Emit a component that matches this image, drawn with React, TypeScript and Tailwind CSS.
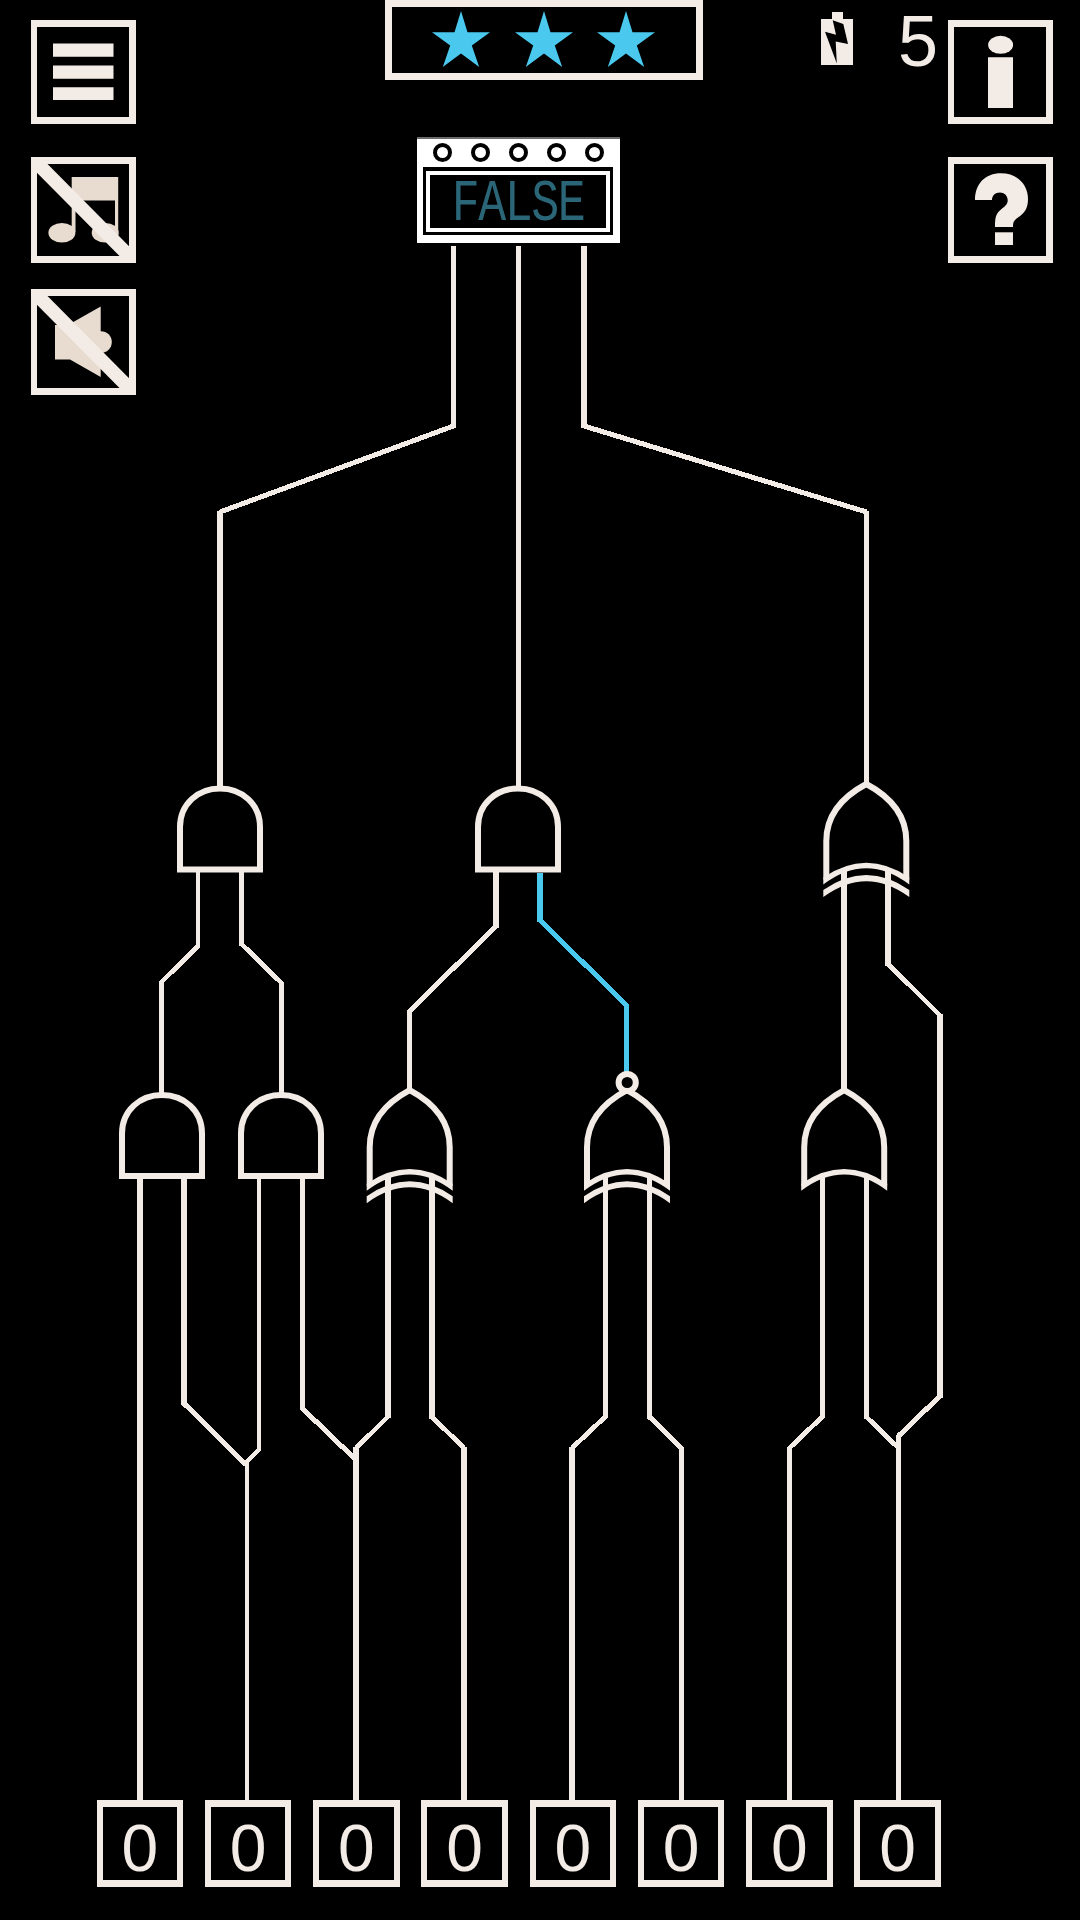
import type { ReactNode } from 'react';

const CREAM = '#f3ece6';
const BLUE = '#4ac8ee';

type Point = [number, number];
type Wire = { points: Point[]; widths: number[]; on?: boolean };

// Each wire lists its corner points and one thickness per segment.
const wires: Wire[] = [
  { points: [[453.5, 246], [453.5, 426], [220, 512], [220, 788]], widths: [5, 5, 6] },
  { points: [[518.5, 246], [518.5, 788]], widths: [5] },
  { points: [[584, 246], [584, 426], [866.5, 512], [866.5, 785]], widths: [6, 5, 5] },

  { points: [[198, 871], [198, 946], [161.5, 982], [161.5, 1094]], widths: [4, 4.8, 5] },
  { points: [[241.5, 871], [241.5, 944], [281.5, 983], [281.5, 1094]], widths: [5, 4.8, 5] },
  { points: [[496, 871], [496, 926], [409.5, 1011.5], [409.5, 1090]], widths: [6, 5, 5] },
  { points: [[540, 873], [540, 920], [626.5, 1005.5], [626.5, 1072]], widths: [6, 5, 5], on: true },
  { points: [[844, 870], [844, 1090]], widths: [6] },
  { points: [[888, 870], [888, 964], [940, 1015.5], [940, 1396], [898.5, 1436], [898.5, 1801]], widths: [6, 4.5, 6, 5, 5] },

  { points: [[140, 1177], [140, 1801]], widths: [6] },
  { points: [[184, 1177], [184, 1403.5], [246, 1464.5]], widths: [6, 5] },
  { points: [[259, 1177], [259, 1449.5], [247, 1461.5], [247, 1801]], widths: [4, 4.5, 4] },
  { points: [[302.5, 1177], [302.5, 1408.5], [355, 1459]], widths: [5, 5] },
  { points: [[388, 1177], [388, 1416.5], [356, 1448], [356, 1801]], widths: [6, 4.5, 6] },
  { points: [[432, 1177], [432, 1417], [464, 1448], [464, 1801]], widths: [6, 4.8, 6] },
  { points: [[605.5, 1177], [605.5, 1416.5], [572, 1448], [572, 1801]], widths: [5, 4.8, 6] },
  { points: [[649.5, 1177], [649.5, 1417], [681.5, 1448], [681.5, 1801]], widths: [5, 5, 5] },
  { points: [[822.5, 1177], [822.5, 1416.5], [789.5, 1448], [789.5, 1801]], widths: [5, 4.8, 5] },
  { points: [[866.5, 1177], [866.5, 1417], [897.5, 1447]], widths: [5, 4.8] },
];

function WireLine({ points, widths, on }: Wire) {
  return (
    <g stroke={on ? BLUE : CREAM} strokeLinecap="butt" shapeRendering="crispEdges">
      {widths.map((w, i) => {
        const [x1, y1] = points[i];
        const [x2, y2] = points[i + 1];
        const straight = x1 === x2;
        // Vertical runs reach slightly past their corners so that the joints stay closed.
        const top = straight && i > 0 ? 1.5 : 0;
        const bottom = straight && i < widths.length - 1 ? 1.5 : 0;
        return <line key={i} x1={x1} y1={y1 - top} x2={x2} y2={y2 + bottom} strokeWidth={w} />;
      })}
    </g>
  );
}

function AndGate({ x, y }: { x: number; y: number }) {
  return (
    <path
      transform={`translate(${x} ${y})`}
      d="M-40 84.5V42C-40 19-22 3.5 0 3.5S40 19 40 42V84.5Z"
      fill="none"
      stroke={CREAM}
      strokeWidth={6}
    />
  );
}

function OrGate({ x, y, exclusive, negated }: { x: number; y: number; exclusive?: boolean; negated?: boolean }) {
  return (
    <g transform={`translate(${x} ${y})`}>
      <path d="M-40 98.5V60C-40 32-22.5 15 0 3C22.5 15 40 32 40 60V98.5" fill="none" stroke={CREAM} strokeWidth={6} />
      <path d="M-43 96.5Q0 67 43 96.5V103.5Q0 71 -43 103.5Z" fill={CREAM} />
      {exclusive && <path d="M-43 109Q0 79 43 109V116Q0 84.3 -43 116Z" fill={CREAM} />}
      {negated && <circle cx={0.2} cy={-4.7} r={8.6} fill="#000" stroke={CREAM} strokeWidth={6} />}
    </g>
  );
}

function Circuit() {
  return (
    <svg className="pointer-events-none absolute inset-0" width="1080" height="1920" viewBox="0 0 1080 1920">
      {wires.map((w, i) => (
        <WireLine key={i} {...w} />
      ))}
      <AndGate x={220} y={785} />
      <AndGate x={518} y={785} />
      <OrGate x={866.3} y={781} exclusive />
      <AndGate x={162} y={1091.5} />
      <AndGate x={281} y={1091.5} />
      <OrGate x={409.7} y={1087.2} exclusive />
      <OrGate x={627} y={1087.2} exclusive negated />
      <OrGate x={844.2} y={1087.2} />
    </svg>
  );
}

function IconButton({ label, tall, children }: { label: string; tall?: boolean; children: ReactNode }) {
  return (
    <button
      aria-label={label}
      className={
        tall
          ? 'relative block h-[106px] w-[105px] border-[7px] border-l-[6px] border-[#f3ece6]'
          : 'relative block h-[104px] w-[105px] border-[7px] border-l-[6px] border-[#f3ece6]'
      }
    >
      {children}
    </button>
  );
}

// Icon drawings use the whole button, border included, as their canvas.
function Icon({ children }: { children: ReactNode }) {
  return (
    <svg className="absolute -left-[6px] -top-[7px]" width="105" height="106" viewBox="0 0 105 106">
      {children}
    </svg>
  );
}

function Slash() {
  return <path d="M0 0L105 106" stroke={CREAM} strokeWidth={13.6} />;
}

function Star() {
  return (
    <svg width="58" height="56" viewBox="0 0 58 56">
      <path d="M29 0L35.5 21.3H58L39.8 34.5L47.2 56L29 42.5L10.8 56L18.2 34.5L0 21.3H22.5Z" fill={BLUE} />
    </svg>
  );
}

function Display() {
  return (
    <div className="ml-8 mt-[57px] h-[106px] w-[203px] border-t-2 border-[#6b6b6b] bg-white px-[6px] pt-1">
      <div className="flex h-[19px] justify-between px-[10px]">
        {[0, 1, 2, 3, 4].map((i) => (
          <span key={i} className="size-[19px] rounded-full border-[4px] border-black bg-white" />
        ))}
      </div>
      <div className="mt-[5px] h-[68px] w-[190px] bg-black px-[3px] pb-[3px] pt-1">
        <div className="flex h-[61px] items-center justify-center border-4 border-white bg-black">
          <span className="block scale-x-[0.79] font-['Liberation_Mono'] text-[59px] leading-[52px] tracking-[-1.8px] text-[#2a6678]">
            <span className="relative top-[3px]">FALSE</span>
          </span>
        </div>
      </div>
    </div>
  );
}

export default function App() {
  return (
    <main className="relative flex h-[1920px] w-[1080px] flex-col justify-between overflow-hidden bg-black font-['Liberation_Sans',sans-serif] text-[#f3ece6]">
      <Circuit />
      <header className="flex items-start pl-[31px]">
        <nav className="flex w-[105px] flex-col pt-5">
          <IconButton label="Menu">
            <Icon>
              <path d="M22 23.5h60.5v13.3H22zM22 45.5h60.5v13.3H22zM22 67.2h60.5v12.8H22z" fill={CREAM} />
            </Icon>
          </IconButton>
          <div className="mt-[33px]">
            <IconButton label="Music off" tall>
              <Icon>
                <g fill="#e8dcd0">
                  <path d="M40.7 20H87.2V79H84V43.5H44.5V75H40.7Z" />
                  <ellipse cx="30.9" cy="75.7" rx="13.5" ry="9.8" />
                  <ellipse cx="74.2" cy="75.7" rx="13.5" ry="9.8" />
                </g>
                <Slash />
              </Icon>
            </IconButton>
          </div>
          <div className="mt-[26px]">
            <IconButton label="Sound off" tall>
              <Icon>
                <g fill="#e8dcd0">
                  <path d="M24 36H37L69.7 17.5V88L39 70.5H24Z" />
                  <circle cx="70" cy="53" r="10.8" />
                </g>
                <Slash />
              </Icon>
            </IconButton>
          </div>
        </nav>

        <section className="ml-[249px] w-[318px]">
          <div className="flex h-20 items-center justify-center gap-[24.5px] border-[7px] border-[#f3ece6] pb-[2px] pr-px">
            <Star />
            <Star />
            <Star />
          </div>
          <Display />
        </section>

        <div className="ml-[118px] flex w-[127px] pt-3">
          <svg width="32" height="53" viewBox="0 0 32 53">
            <path d="M11 0H22V7H32V53H0V7H11Z" fill={CREAM} />
            <path d="M11.7 8.3L22.3 12L27 32L14.7 29.5L15.8 51.5L4 19.7L15 22.7Z" fill="#000" />
          </svg>
          <span className="ml-[45px] mt-[-11px] text-[72px] leading-[80px]">5</span>
        </div>

        <nav className="flex w-[105px] flex-col gap-[33px] pt-5">
          <IconButton label="Info">
            <Icon>
              <ellipse cx="52.6" cy="24.8" rx="12.5" ry="9" fill={CREAM} />
              <path d="M40 37.3H65V88H40Z" fill={CREAM} />
            </Icon>
          </IconButton>
          <IconButton label="Help" tall>
            <Icon>
              <path
                d="M27 43C27 27 37 16.3 53 16.3S80 27 80 42C80 52 76 56.5 70 60.5C66 63.5 65 65 65 70H47C47 60 48 56.5 53 52.5C58 48.5 59.7 47 59.7 43C59.7 38.5 56 35.5 52 35.5C47 35.5 44 38.5 44 43Z"
                fill={CREAM}
              />
              <path d="M47 75.3H65V88H47Z" fill={CREAM} />
            </Icon>
          </IconButton>
        </nav>
      </header>

      <footer className="relative mb-[33px] ml-[96.5px] flex w-[844.5px] justify-between">
        {[0, 0, 0, 0, 0, 0, 0, 0].map((bit, i) => (
          <button
            key={i}
            className="flex h-[87px] w-[86.5px] items-center justify-center border-[6px] border-y-[7px] border-[#f3ece6] bg-black text-[66px] leading-[66px]"
          >
            <span className="pt-[8px]">{bit}</span>
          </button>
        ))}
      </footer>
    </main>
  );
}
